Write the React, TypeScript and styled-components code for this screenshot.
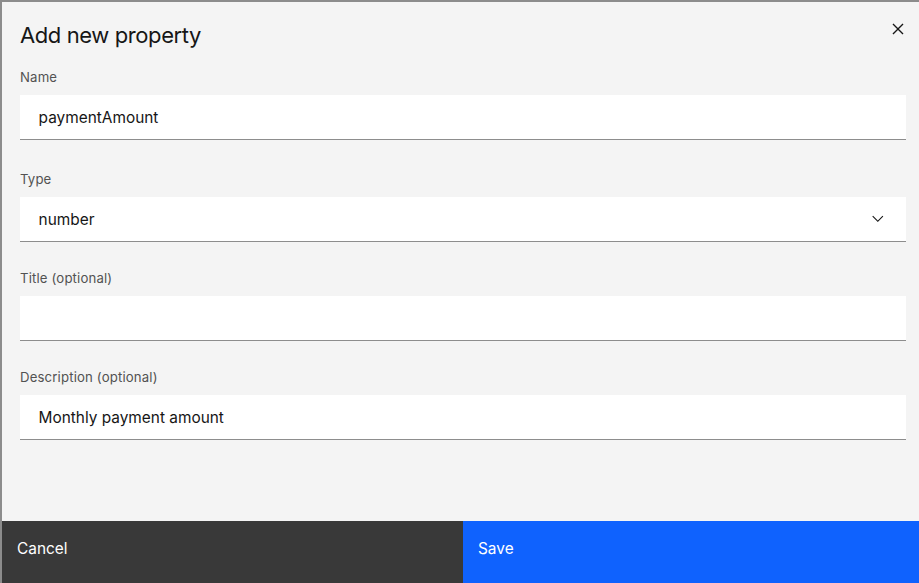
import React from "react";
import styled, { createGlobalStyle } from "styled-components";

const GlobalStyle = createGlobalStyle`
  html, body {
    margin: 0;
    padding: 0;
    overflow: hidden;
    background: #8c8c8c;
  }
  * { box-sizing: border-box; }
  body {
    font-family: Inter, "Noto Sans", "Liberation Sans", sans-serif;
    color: #161616;
  }
`;

const Backdrop = styled.div`
  width: 919px;
  height: 583px;
  padding: 2px 0 0 2px;
  overflow: hidden;
  background: #8c8c8c;
`;

const Modal = styled.div`
  width: 922px;
  height: 589px;
  background: #f4f4f4;
  display: flex;
  flex-direction: column;
`;

const Header = styled.div`
  display: flex;
  justify-content: space-between;
  align-items: flex-start;
  height: 53px;
  padding-left: 18px;
`;

const Heading = styled.h2`
  margin: 17.5px 0 0;
  font-size: 22px;
  line-height: 31px;
  font-weight: 400;
  letter-spacing: -0.4px;
  color: #161616;
`;

const CloseButton = styled.button`
  width: 53px;
  height: 53px;
  border: none;
  background: transparent;
  display: flex;
  align-items: center;
  justify-content: center;
  padding: 0;
  color: #161616;
  cursor: pointer;
`;

const Content = styled.div`
  padding: 14.4px 18px 0;
  display: flex;
  flex-direction: column;
`;

const Field = styled.div<{ $gap: number }>`
  display: flex;
  flex-direction: column;
  margin-bottom: ${(p) => p.$gap}px;
`;

const Label = styled.label`
  font-size: 13.2px;
  line-height: 17.6px;
  letter-spacing: 0.15px;
  color: #525252;
  margin-bottom: 8px;
`;

const Input = styled.div`
  height: 45px;
  background: #ffffff;
  border-bottom: 1px solid #8d8d8d;
  padding: 1px 17.6px 0 18.6px;
  display: flex;
  align-items: center;
  justify-content: space-between;
  font-size: 15.4px;
  color: #161616;
`;

const Spacer = styled.div`
  flex: 1;
`;

const Footer = styled.div`
  display: flex;
  height: 70px;
  flex-shrink: 0;
`;

const FooterButton = styled.button<{ $primary?: boolean }>`
  flex: 1;
  border: none;
  margin: 0;
  text-align: left;
  display: flex;
  align-items: flex-start;
  padding: 17.5px 15px;
  font-family: inherit;
  font-size: 15.4px;
  line-height: 19.8px;
  color: #ffffff;
  background: ${(p) => (p.$primary ? "#0f62fe" : "#393939")};
  cursor: pointer;
`;

const ChevronWrap = styled.span`
  display: flex;
  margin-right: 2px;
  margin-top: -1px;
`;

const CloseIcon = () => (
  <svg width="22" height="22" viewBox="0 0 32 32" fill="currentColor" aria-hidden="true">
    <path d="M24 9.4L22.6 8 16 14.6 9.4 8 8 9.4 14.6 16 8 22.6 9.4 24 16 17.4 22.6 24 24 22.6 17.4 16 24 9.4z" />
  </svg>
);

const ChevronIcon = () => (
  <ChevronWrap>
    <svg width="17.6" height="17.6" viewBox="0 0 32 32" fill="#161616" aria-hidden="true">
      <path d="M16 22L6 12l1.4-1.4L16 19.2l8.6-8.6L26 12z" />
    </svg>
  </ChevronWrap>
);

export default function App() {
  return (
    <>
      <GlobalStyle />
      <Backdrop>
        <Modal>
          <Header>
            <Heading>Add new property</Heading>
            <CloseButton aria-label="Close">
              <CloseIcon />
            </CloseButton>
          </Header>
          <Content>
            <Field $gap={31.4}>
              <Label>Name</Label>
              <Input>paymentAmount</Input>
            </Field>
            <Field $gap={28.4}>
              <Label>Type</Label>
              <Input>
                <span>number</span>
                <ChevronIcon />
              </Input>
            </Field>
            <Field $gap={28.4}>
              <Label>Title (optional)</Label>
              <Input />
            </Field>
            <Field $gap={0}>
              <Label>Description (optional)</Label>
              <Input>Monthly payment amount</Input>
            </Field>
          </Content>
          <Spacer />
          <Footer>
            <FooterButton>Cancel</FooterButton>
            <FooterButton $primary>Save</FooterButton>
          </Footer>
        </Modal>
      </Backdrop>
    </>
  );
}
